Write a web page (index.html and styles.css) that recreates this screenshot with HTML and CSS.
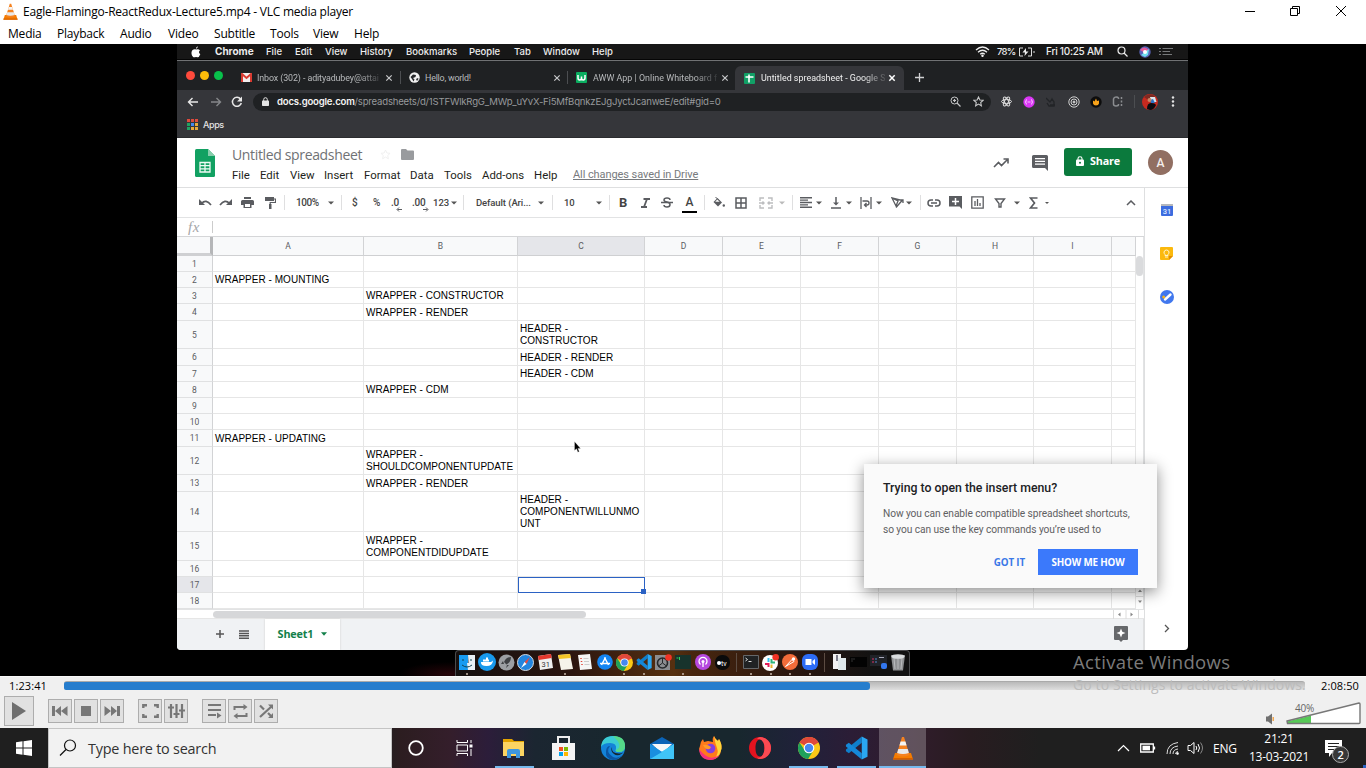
FILE: index.html
```html
<!DOCTYPE html>
<html lang="en">
<head>
<meta charset="utf-8">
<title>Eagle-Flamingo-ReactRedux-Lecture5.mp4 - VLC media player</title>
<link rel="stylesheet" href="styles.css">
</head>
<body>
<svg width="0" height="0" class="defs">
  <defs>
    <symbol id="cone" viewBox="0 0 20 24">
      <path d="M2 17h16l2 6.500H0z" fill="#f57c00"/><path d="M0 22h20v1.500H0z" fill="#d65f00"/>
      <path d="M9 1h2l5.500 18q-6.500 3-13 0z" fill="#f58220"/>
      <path d="M7.600 5.500h4.800l1.200 4H6.400z" fill="#f4f4f4"/><path d="M5.300 13h9.400l1.200 4q-6 2-11.800 0z" fill="#e9e9e9"/>
    </symbol>
    <symbol id="chrome" viewBox="0 0 24 24">
      <circle cx="12" cy="12" r="12" fill="#fbc816"/>
      <path d="M12 12 1.600 6A12 12 0 0 1 22.400 6z" fill="#e0483a"/><path d="M12 0A12 12 0 0 1 22.400 6.500H12z" fill="#e0483a"/>
      <path d="M1.600 6A12 12 0 0 0 11 24L17 14.500 12 12 7 14z" fill="#1fa15c"/>
      <circle cx="12" cy="12" r="5.800" fill="#fff"/><circle cx="12" cy="12" r="4.600" fill="#4788f0"/>
    </symbol>
    <symbol id="code" viewBox="0 0 24 24">
      <path d="M17.500 0v6.500L4 17.500 1 15.500v-2z" fill="#0f7fcb"/>
      <path d="M17.500 24v-6.500L4 6.500 1 8.500v2z" fill="#1588d8"/>
      <path d="M17.500 0 23.500 3v18l-6 3z" fill="#2aa7f2"/>
    </symbol>
    <symbol id="down" viewBox="0 0 6 4"><path d="M0 .5h6L3 3.500z" fill="#555"/></symbol>
    <symbol id="x" viewBox="0 0 8 8"><path d="M1.300 1.300l5.400 5.400M6.700 1.300 1.300 6.700" stroke="#c8c9cb" stroke-width="1.200"/></symbol>
  </defs>
</svg>

<header class="titlebar">
  <svg class="logo" width="15" height="17"><use href="#cone"/></svg>
  <span class="title">Eagle-Flamingo-ReactRedux-Lecture5.mp4 - VLC media player</span>
  <svg width="12" height="12" viewBox="0 0 12 12"><path d="M1 6.500h10" stroke="#000"/></svg>
  <svg width="12" height="12" viewBox="0 0 12 12" fill="none" stroke="#000"><path d="M1.500 3.500h7v7h-7zM3.500 3.500v-2h7v7h-2"/></svg>
  <svg width="12" height="12" viewBox="0 0 12 12"><path d="M1 1l10 10M11 1 1 11" stroke="#000"/></svg>
</header>
<nav class="menubar"><span>Media</span><span>Playback</span><span>Audio</span><span>Video</span><span>Subtitle</span><span>Tools</span><span>View</span><span>Help</span></nav>

<main class="stage">
<div class="video">
  <div class="macbar">
    <svg width="10" height="12" viewBox="0 0 10 12"><path d="M6.800.3Q7 2 5 3 4.900 1 6.800.3M5 3.600Q7.500 2.500 9 4.400 6.800 5.900 9.300 8.200 8 11.500 6.500 11.200 5 10.600 3.700 11.200C1.900 11.800.200 8.500.5 6.400.800 3.900 3 2.800 5 3.600" fill="#fff"/></svg>
    <b>Chrome</b><span>File</span><span>Edit</span><span>View</span><span>History</span><span>Bookmarks</span><span>People</span><span>Tab</span><span>Window</span><span>Help</span>
    <svg width="15" height="11" viewBox="0 0 15 11" fill="none" stroke="#eee" stroke-width="1.300"><path d="M1 4q6.500-6 13 0M3 6.200q4.500-4 9 0M5.200 8.300q2.300-2 4.600 0"/><circle cx="7.500" cy="9.800" r=".6" fill="#eee"/></svg>
    <span class="pct">78%</span>
    <svg width="17" height="10" viewBox="0 0 17 10" fill="none" stroke="#ddd"><path d="M5 1H1.500v8H5M10 1h3.500v8H10M16 4v2"/><path d="M8 1 4.500 5.500H7L6.500 9 10.500 4.500H8z" fill="#eee" stroke="none"/></svg>
    <span class="clock">Fri 10:25 AM</span>
    <svg width="11" height="11" viewBox="0 0 11 11" fill="none" stroke="#eee" stroke-width="1.200"><circle cx="4.500" cy="4.500" r="3.500"/><path d="m7 7 3.500 3.500"/></svg>
    <svg width="12" height="12" viewBox="0 0 12 12"><circle cx="6" cy="6" r="5.700" fill="#5a63b8"/><path d="M1 4q4-5 9 0L6 7z" fill="#e45b9b"/><path d="M2 9l8-6-1 6-3 2z" fill="#6fe0ee"/><circle cx="6" cy="6" r="2" fill="#fff"/></svg>
    <svg width="14" height="9" viewBox="0 0 14 9" stroke="#77797b"><path d="M0 1.500h2M3.500 1.500H14M0 4.500h2M3.500 4.500H11M0 7.500h2M3.500 7.500H13"/></svg>
  </div>

  <div class="tabs">
    <i class="light red"></i><i class="light yellow"></i><i class="light green"></i>
    <svg class="gm" width="11" height="9" viewBox="0 0 11 9"><path d="M0 0h11v9H0z" fill="#f3eeee"/><path d="M1 9V1l4.500 4L10 1v8" fill="none" stroke="#d93a30" stroke-width="2"/></svg>
    <span class="t1 fade">Inbox (302) - adityadubey@attai</span>
    <svg width="8" height="8"><use href="#x"/></svg><i class="sep"></i>
    <svg width="11" height="11" viewBox="0 0 11 11"><circle cx="5.500" cy="5.500" r="5.200" fill="#f1f1f1"/><path d="M1.500 5 4 2.500l3 .5-.5 2L4 6l1.500 1.500-1 2L3 7zM7 7l2-1 .5 1L8 9z" fill="#25272a"/></svg>
    <span class="t2">Hello, world!</span>
    <svg width="8" height="8"><use href="#x"/></svg><i class="sep"></i>
    <svg width="11" height="11" viewBox="0 0 11 11"><rect width="11" height="11" rx="1" fill="#0aae60"/><path d="M2 3v3q0 2 1.700 2T5.500 6V4.500V6q0 2 1.700 2T9 6V3" fill="none" stroke="#fff" stroke-width="1.500"/></svg>
    <span class="t3 fade">AWW App | Online Whiteboard f</span>
    <svg width="8" height="8"><use href="#x"/></svg>
    <div class="active">
      <svg width="11" height="11" viewBox="0 0 11 11"><rect width="11" height="11" rx="1" fill="#11a066"/><path d="M1.500 4h8M5 1.500v8" stroke="#fff" stroke-width="1.600"/></svg>
      <span class="t4 fade">Untitled spreadsheet - Google S</span>
      <svg width="8" height="8" viewBox="0 0 8 8"><path d="M1.300 1.300l5.400 5.400M6.700 1.300 1.300 6.700" stroke="#fff" stroke-width="1.500"/></svg>
    </div>
    <svg width="9" height="9" viewBox="0 0 9 9"><path d="M4.500 0v9M0 4.500h9" stroke="#d0d1d3" stroke-width="1.300"/></svg>
  </div>

  <div class="address">
    <svg width="12" height="10" viewBox="0 0 12 10" fill="none" stroke="#e8e8e8" stroke-width="1.400"><path d="M11 5H1.500M5.500 1l-4 4 4 4"/></svg>
    <svg width="12" height="10" viewBox="0 0 12 10" fill="none" stroke="#85878a" stroke-width="1.400"><path d="M1 5h9.500M6.500 1l4 4-4 4"/></svg>
    <svg width="12" height="12" viewBox="0 0 12 12"><path d="M9.600 3.200A4.500 4.500 0 1 0 10.300 7" fill="none" stroke="#e8e8e8" stroke-width="1.500"/><path d="M11 .5v5H6z" fill="#e8e8e8"/></svg>
    <div class="omni">
      <svg width="7" height="9" viewBox="0 0 7 9"><rect y="3.500" width="7" height="5.500" rx=".7" fill="#e4e4e4"/><path d="M1.700 4V2.500q0-1.800 1.800-1.800t1.800 1.800V4" fill="none" stroke="#e4e4e4"/></svg>
      <span class="url"><b>docs.google.com</b>/spreadsheets/d/1STFWlkRgG_MWp_uYvX-Fi5MfBqnkzEJgJyctJcanweE/edit#gid=0</span>
      <svg width="11" height="11" viewBox="0 0 11 11" fill="none" stroke="#c6c7c8"><circle cx="4.500" cy="4.500" r="3.500"/><path d="m7 7 3.500 3.500M3 4.500h3M4.500 3v3" stroke-width="1.200"/></svg>
      <svg width="11" height="11" viewBox="0 0 11 11"><path d="m5.500 1 1.400 3 3.200.3-2.400 2.200.7 3.300-2.900-1.700-2.900 1.700.7-3.300L.9 4.300l3.200-.3z" fill="none" stroke="#c6c7c8" stroke-width="1.100"/></svg>
    </div>
    <svg width="11" height="11" viewBox="0 0 11 11" fill="none" stroke="#dedede"><ellipse cx="5.500" cy="5.500" rx="5" ry="2"/><ellipse cx="5.500" cy="5.500" rx="5" ry="2" transform="rotate(60 5.500 5.500)"/><ellipse cx="5.500" cy="5.500" rx="5" ry="2" transform="rotate(120 5.500 5.500)"/></svg>
    <svg width="12" height="12" viewBox="0 0 12 12"><circle cx="6" cy="6" r="5.700" fill="#db36f5"/><path d="M4 3.500q-1 0-1 1.500T2.200 6Q3 6 3 7t1 1.500M8 3.500q1 0 1 1.500t.8 1Q9 6 9 7T8 8.500M4.500 6h3" fill="none" stroke="#f6c8ff"/></svg>
    <svg width="10" height="10" viewBox="0 0 10 10" fill="none" stroke="#222427" stroke-width="1.300"><path d="M0 1l4 4 2-3 2 3v4H3L1 6M4 8h5"/></svg>
    <svg width="12" height="12" viewBox="0 0 12 12" fill="none" stroke="#cfcfcf"><circle cx="6" cy="6" r="5.200"/><circle cx="6" cy="6" r="3"/><circle cx="6" cy="6" r="1" fill="#cfcfcf"/></svg>
    <svg width="12" height="12" viewBox="0 0 12 12"><circle cx="6" cy="6" r="5.700" fill="#0d0d0d"/><path d="M3 4.500 4.500 5.500 6 2.500l1 2.500 2-.5v3Q8.500 9.500 6 9.500T3 7.500z" fill="#f9a31a"/></svg>
    <svg width="12" height="11" viewBox="0 0 12 11"><path d="M6.500 3V2q-.5-1-2.500-1T1.500 3v5q0 2 2.500 2t2.500-1.500V8M9.500 1v2M9.500 4.500v2M9.500 8v2" fill="none" stroke="#8b8d90" stroke-width="1.500"/></svg>
    <i class="sep"></i>
    <svg width="16" height="16" viewBox="0 0 16 16"><circle cx="8" cy="8" r="8" fill="#c8291f"/><path d="M2 3q5-5 11-1L9 8z" fill="#7e2a22"/><path d="M8 3h5l1.500 5H9z" fill="#dbe7ee"/><path d="M8 6l3-1 2 4H9z" fill="#2874c7"/><path d="M5 15q0-6 4-6t5 2q-2 5-6 5z" fill="#0b0b10"/><circle cx="7.500" cy="6" r="2" fill="#c98664"/></svg>
    <svg width="4" height="11" viewBox="0 0 4 11" fill="#e4e4e4"><circle cx="2" cy="1.500" r="1.200"/><circle cx="2" cy="5.500" r="1.200"/><circle cx="2" cy="9.500" r="1.200"/></svg>
  </div>
  <div class="bookmarks">
    <svg width="11" height="11" viewBox="0 0 11 11"><path d="M0 0h3v3H0zM4 0h3v3H4zM8 0h3v3H8z" fill="#de4a3d"/><path d="M0 4h3v3H0zM0 8h3v3H0z" fill="#1fa463"/><path d="M4 4h3v3H4z" fill="#4688f1"/><path d="M8 4h3v3H8zM4 8h3v3H4zM8 8h3v3H8z" fill="#e9a83a"/></svg>
    <span>Apps</span>
  </div>

  <div class="sheets">
    <div class="dochead">
      <svg class="doclogo" width="20" height="28" viewBox="0 0 20 28"><path d="M1.500 0H13l7 7v19.500q0 1.500-1.500 1.500h-17Q0 28 0 26.500v-25Q0 0 1.500 0" fill="#12a162"/><path d="M13 0l7 7h-7z" fill="#87ceac"/><path d="M5 13.500h10v9.500H5zM10 13.500V23M5 16.700h10M5 19.800h10" fill="none" stroke="#eefaf4" stroke-width="1.300"/></svg>
      <div class="docinfo">
        <div class="docname"><span>Untitled spreadsheet</span>
          <svg width="11" height="11" viewBox="0 0 11 11"><path d="m5.500 1 1.400 3 3.200.3-2.400 2.200.7 3.300-2.900-1.700-2.900 1.700.7-3.300L.9 4.300l3.200-.3z" fill="none" stroke="#f0f0f0"/></svg>
          <svg width="13" height="11" viewBox="0 0 13 11"><path d="M1 0h4l1.500 1.500H12q1 0 1 1V10q0 1-1 1H1q-1 0-1-1V1q0-1 1-1" fill="#999b9e"/></svg></div>
        <div class="docmenu"><span>File</span><span>Edit</span><span>View</span><span>Insert</span><span>Format</span><span>Data</span><span>Tools</span><span>Add-ons</span><span>Help</span><span class="saved">All changes saved in Drive</span></div>
      </div>
      <svg width="16" height="10" viewBox="0 0 16 10" fill="none" stroke="#5a5c60" stroke-width="1.600"><path d="m1 9 4.500-4.500 3 3L14 2M10.500 1H15v4.500"/></svg>
      <svg width="16" height="16" viewBox="0 0 16 16"><path d="M1.500 0h13Q16 0 16 1.500V16l-3-3H1.500Q0 13 0 11.500v-10Q0 0 1.500 0" fill="#5c5e62"/><path d="M3 3.700h10M3 6.400h10M3 9.100h10" stroke="#fff" stroke-width="1.200"/></svg>
      <div class="share"><svg width="8" height="10" viewBox="0 0 8 10"><rect y="3.500" width="8" height="6.500" rx="1" fill="#fff"/><path d="M2 4V2.500Q2 .7 4 .7t2 1.800V4" fill="none" stroke="#fff" stroke-width="1.100"/><circle cx="4" cy="6.700" r="1" fill="#0b7a3d"/></svg><span>Share</span></div>
      <div class="avatar">A</div>
    </div>
    <div class="body">
      <div class="left">
        <div class="tools">
          <svg width="14" height="8" viewBox="0 0 14 8"><path d="M1 0v6h6z" fill="#5a5c60"/><path d="M3.500 4.500Q8-.5 13 6" fill="none" stroke="#5a5c60" stroke-width="1.700"/></svg>
          <svg width="14" height="8" viewBox="0 0 14 8"><path d="M13 0v6H7z" fill="#5a5c60"/><path d="M10.500 4.500Q6-.5 1 6" fill="none" stroke="#5a5c60" stroke-width="1.700"/></svg>
          <svg width="13" height="11" viewBox="0 0 13 11"><path d="M3 0h7v2H3zM1.500 3h10Q13 3 13 4.500V8h-2.500v3h-8V8H0V4.500Q0 3 1.500 3" fill="#5a5c60"/><path d="M4 7h5v3H4z" fill="#fff"/></svg>
          <svg width="11" height="12" viewBox="0 0 11 12"><path d="M0 0h9v4H0zM4 7h2.500v5H4z" fill="#5a5c60"/><path d="M9 2h1.500v3.500H5.200V8" fill="none" stroke="#5a5c60" stroke-width="1.200"/></svg>
          <i class="bar"></i><span class="zoomlevel">100%</span><svg width="6" height="4"><use href="#down"/></svg><i class="bar"></i>
          <b>$</b><b>%</b>
          <b class="dec">.0<svg width="6" height="5" viewBox="0 0 6 5"><path d="M6 2.500H1.500M3 .5l-2 2 2 2" fill="none" stroke="#5a5c60"/></svg></b>
          <b class="dec">.00<svg width="6" height="5" viewBox="0 0 6 5"><path d="M0 2.500h4.500M3 .5l2 2-2 2" fill="none" stroke="#5a5c60"/></svg></b>
          <b class="n123">123</b><svg width="6" height="4"><use href="#down"/></svg><i class="bar"></i>
          <span class="def">Default (Ari...</span><svg width="6" height="4"><use href="#down"/></svg><i class="bar"></i>
          <span class="def">10</span><svg width="6" height="4"><use href="#down"/></svg><i class="bar"></i>
          <b class="big">B</b>
          <svg width="11" height="10" viewBox="0 0 11 10"><path d="M3.500 1H10M1 9h6M7 1 4 9" stroke="#5a5c60" stroke-width="1.800"/></svg>
          <svg width="12" height="11" viewBox="0 0 12 11" fill="none" stroke="#5a5c60" stroke-width="1.500"><path d="M9 3Q9 1 6 1T3 3q0 1.500 3 2t3 2.500Q9 10 6 10T3 8"/><path d="M0 5.500h12" stroke-width="1.300"/></svg>
          <b class="ink">A</b><i class="bar"></i>
          <svg width="12" height="11" viewBox="0 0 12 11"><path d="m4.500 1 4.500 4.500L5 9.500.5 5z" fill="#5a5c60"/><path d="M2.500 0 6 3.500" stroke="#5a5c60"/><path d="M4.300 2.500 2.200 4.800h4.500z" fill="#fff"/><circle cx="10.800" cy="8.500" r="1.200" fill="#5a5c60"/></svg>
          <svg width="12" height="12" viewBox="0 0 12 12"><path d="M1 1h10v10H1zM6 1v10M1 6h10" fill="none" stroke="#5a5c60" stroke-width="1.500"/></svg>
          <svg width="14" height="12" viewBox="0 0 14 12" fill="none" stroke="#bcbdbf" stroke-width="1.400"><path d="M5 1H1v3M9 1h4v3M5 11H1V8M9 11h4V8M0 6h5M9 6h5M3.500 4.500 5 6 3.500 7.500M10.500 4.500 9 6l1.500 1.500"/></svg>
          <svg width="6" height="4" opacity=".4"><use href="#down"/></svg><i class="bar"></i>
          <svg width="12" height="11" viewBox="0 0 12 11" stroke="#5a5c60" stroke-width="1.400"><path d="M0 .7h12M0 3.100h8M0 5.500h12M0 7.900h8M0 10.300h12"/></svg><svg width="6" height="4"><use href="#down"/></svg>
          <svg width="10" height="12" viewBox="0 0 10 12"><path d="M0 11h10M5 0v6" stroke="#5a5c60" stroke-width="1.500"/><path d="M2 5.500h6L5 8.500z" fill="#5a5c60"/></svg><svg width="6" height="4"><use href="#down"/></svg>
          <svg width="12" height="12" viewBox="0 0 12 12" fill="none" stroke="#5a5c60" stroke-width="1.300"><path d="M1 0v12M11 0v12M2.500 4H7q2 0 2 2T7 8H5M6.500 6 4.500 8l2 2"/></svg><svg width="6" height="4"><use href="#down"/></svg>
          <svg width="13" height="12" viewBox="0 0 13 12" fill="none" stroke="#5a5c60" stroke-width="1.300"><path d="M1 1l4 8 2-5zM1 1l8 2M5 10.500 11.500 3M9 3h3v3"/></svg><svg width="6" height="4"><use href="#down"/></svg><i class="bar"></i>
          <svg width="14" height="8" viewBox="0 0 14 8" fill="none" stroke="#5a5c60" stroke-width="1.500"><path d="M6 1H4Q1 1 1 4t3 3h2M8 1h2q3 0 3 3t-3 3H8M4 4h6"/></svg>
          <svg width="13" height="13" viewBox="0 0 13 13"><path d="M0 0h13v13l-2.500-2.500H0z" fill="#5a5c60"/><path d="M6.500 2v7M3 5.500h7" stroke="#fff" stroke-width="1.500"/></svg>
          <svg width="13" height="13" viewBox="0 0 13 13" fill="none" stroke="#5a5c60" stroke-width="1.300"><path d="M.8.8h11.400v11.400H.8zM4 5v5M6.500 3v7M9 7v3"/></svg>
          <svg width="12" height="10" viewBox="0 0 12 10"><path d="M1.500 1h9L7 5.500V9H5V5.500z" fill="none" stroke="#5a5c60" stroke-width="1.400"/></svg><svg width="6" height="4"><use href="#down"/></svg>
          <svg width="9" height="12" viewBox="0 0 9 12"><path d="M8.500 1H1.500L5.500 6 1.500 11h7" fill="none" stroke="#5a5c60" stroke-width="1.700"/></svg><svg width="4" height="4"><use href="#down"/></svg>
          <svg width="10" height="6" viewBox="0 0 10 6"><path d="m1 5 4-4 4 4" fill="none" stroke="#5a5c60" stroke-width="1.500"/></svg>
        </div>
        <div class="formula"><em>fx</em><i></i></div>
        <div class="gridwrap">
        <table class="grid">
          <colgroup><col class="ch"><col class="ca"><col class="cb"><col class="cc"><col class="cd"><col class="cd"><col class="cd"><col class="cd"><col class="ce"><col class="cd"><col class="cj"></colgroup>
          <tr class="cols"><th class="corner"><th>A<th>B<th class="sel">C<th>D<th>E<th>F<th>G<th>H<th>I<th>
          <tr class="r16"><th>1<td><td><td><td><td><td><td><td><td><td>
          <tr class="r16"><th>2<td>WRAPPER - MOUNTING<td><td><td><td><td><td><td><td><td>
          <tr class="r16"><th>3<td><td>WRAPPER - CONSTRUCTOR<td><td><td><td><td><td><td><td>
          <tr class="r17"><th>4<td><td>WRAPPER - RENDER<td><td><td><td><td><td><td><td>
          <tr class="r28"><th>5<td><td><td>HEADER -<br>CONSTRUCTOR<td><td><td><td><td><td><td>
          <tr class="r17"><th>6<td><td><td>HEADER - RENDER<td><td><td><td><td><td><td>
          <tr class="r16"><th>7<td><td><td>HEADER - CDM<td><td><td><td><td><td><td>
          <tr class="r16"><th>8<td><td>WRAPPER - CDM<td><td><td><td><td><td><td><td>
          <tr class="r16"><th>9<td><td><td><td><td><td><td><td><td><td>
          <tr class="r16"><th>10<td><td><td><td><td><td><td><td><td><td>
          <tr class="r17"><th>11<td>WRAPPER - UPDATING<td><td><td><td><td><td><td><td><td>
          <tr class="r28"><th>12<td><td>WRAPPER -<br>SHOULDCOMPONENTUPDATE<td><td><td><td><td><td><td><td>
          <tr class="r17"><th>13<td><td>WRAPPER - RENDER<td><td><td><td><td><td><td><td>
          <tr class="r40"><th>14<td><td><td>HEADER -<br>COMPONENTWILLUNMO<br>UNT<td><td><td><td><td><td><td>
          <tr class="r29"><th>15<td><td>WRAPPER -<br>COMPONENTDIDUPDATE<td><td><td><td><td><td><td><td>
          <tr class="r16"><th>16<td><td><td><td><td><td><td><td><td><td>
          <tr class="r16"><th class="sel">17<td><td><td class="cur"><td><td><td><td><td><td><td>
          <tr class="r16"><th>18<td><td><td><td><td><td><td><td><td><td>
        </table>
        <div class="vscroll"><i></i><svg width="8" height="24" viewBox="0 0 8 24"><path d="M0 .5h8M0 11.500h8" stroke="#dcdcdc"/><path d="M2 7h4L4 4.500zM2 15.500h4L4 18z" fill="#888"/></svg></div>
        </div>
        <div class="hscroll"><i class="thumb"></i><svg width="27" height="9" viewBox="0 0 27 9"><path d="M.5 0v9M13 0v9M25.500 0v9" stroke="#dcdcdc"/><path d="M7.500 2.500v4L5 4.500zM17.500 2.500v4L20 4.500z" fill="#888"/></svg></div>
        <div class="sheetbar">
          <svg width="8" height="8" viewBox="0 0 8 8"><path d="M4 0v8M0 4h8" stroke="#555" stroke-width="1.500"/></svg>
          <svg width="10" height="9" viewBox="0 0 10 9"><path d="M0 1h10M0 3.400h10M0 5.800h10M0 8.200h10" stroke="#555" stroke-width="1.500"/></svg>
          <div class="sheettab"><b>Sheet1</b><svg width="6" height="4" viewBox="0 0 6 4"><path d="M0 .3h6L3 3.700z" fill="#12804a"/></svg></div>
          <svg width="14" height="16" viewBox="0 0 14 16"><path d="M1 0h12q1 0 1 1v12q0 1-1 1H9l-2 2-2-2H1q-1 0-1-1V1q0-1 1-1" fill="#66686b"/><path d="M7 2.500 8.300 5.700 11.500 7 8.300 8.300 7 11.500 5.700 8.300 2.500 7 5.700 5.700z" fill="#fff"/></svg>
        </div>
      </div>
      <aside class="side">
        <svg width="12" height="12" viewBox="0 0 12 12"><path d="M0 0h12v2.500H0z" fill="#b5b8bd"/><path d="M0 2h12v9q0 1-1 1H1q-1 0-1-1z" fill="#3c6cdf"/><text x="6" y="9.500" font-size="7.500" text-anchor="middle" fill="#dfe9ff">31</text></svg>
        <svg width="13" height="13" viewBox="0 0 13 13"><path d="M1 0h11q1 0 1 1v8l-4 4H1q-1 0-1-1V1q0-1 1-1" fill="#fbb90d"/><path d="M13 9l-4 4V9z" fill="#e38b00"/><path d="M5 8.500V7.300Q3.800 6.500 4 5q.5-2 2.500-2T9 5Q9.200 6.500 8 7.300v1.200zM5 10h3" fill="none" stroke="#fff3cc"/></svg>
        <svg width="14" height="14" viewBox="0 0 14 14"><circle cx="7" cy="7" r="7" fill="#4178ee"/><path d="M5 9.500 10.500 4.500" fill="none" stroke="#fff" stroke-width="2.400" stroke-linecap="round"/><circle cx="3.700" cy="7" r="1.500" fill="#f6b31b"/></svg>
        <svg class="expand" width="6" height="9" viewBox="0 0 6 9"><path d="m1 1 3.500 3.500L1 8" fill="none" stroke="#555" stroke-width="1.300"/></svg>
      </aside>
    </div>
  </div>

  <div class="dockrow"><div class="dock">
    <svg width="16" height="15" viewBox="0 0 16 15"><path d="M0 0h9v15H0z" fill="#189bf2"/><path d="M9 0h7v15H9L8 8h1.500z" fill="#e8f0f6"/><path d="M3 10q5 4 10 0M4 4v2M12 4v2" fill="none" stroke="#145"/></svg>
    <svg width="18" height="18" viewBox="0 0 18 18"><circle cx="9" cy="9" r="9" fill="#1899ec"/><path d="M3 9h10l2-1.500Q14.500 13 8.500 13T3 9M5 6.500h6V8.500H5zM8 4.500h2v2H8z" fill="#fff"/></svg>
    <svg width="17" height="17" viewBox="0 0 17 17"><circle cx="8.500" cy="8.500" r="8" fill="#9c9fa3"/><path d="M13 3q-5 0-7 5l2.500 2.500Q13 8 13 3M5 7 3 10h3M9 11l-1 3 3-3" fill="#3f4144"/></svg>
    <svg width="17" height="17" viewBox="0 0 17 17"><circle cx="8.500" cy="8.500" r="8" fill="#2385df" stroke="#d7dadd"/><path d="m13 3-3.500 7-2-2z" fill="#e84a3f"/><path d="m4 14 3.500-6 2 2z" fill="#fff"/></svg>
    <svg width="15" height="16" viewBox="0 0 15 16"><path d="m0 2 13-2 2 14-13 2z" fill="#f0f0f0"/><path d="m0 2 13-2 .6 4-13 2z" fill="#e3382d"/><text x="3.500" y="13" font-size="7.500" fill="#333">31</text></svg>
    <svg width="15" height="16" viewBox="0 0 15 16"><path d="m0 1 12-1 3 15-12 1z" fill="#f5f3ea"/><path d="m0 1 12-1 .8 4L1 5z" fill="#f4c526"/></svg>
    <svg width="14" height="16" viewBox="0 0 14 16"><path d="m0 1 12-1 2 15-12 1z" fill="#f6f6f6"/><path d="M3 4v1M3.500 7v1M4 10v1" stroke="#e0453a" stroke-width="1.500"/><path d="M5.500 4.500h5M6 7.500h5M6.500 10.500h5" stroke="#ccc"/></svg>
    <svg width="16" height="16" viewBox="0 0 16 16"><circle cx="8" cy="8" r="7.800" fill="#1485f3"/><path d="M8.500 3.500 4.500 11M7.500 3.500 11.500 11M3 9.500h10" stroke="#fff" stroke-width="1.500"/></svg>
    <svg width="17" height="17"><use href="#chrome"/></svg>
    <svg width="16" height="16"><use href="#code"/></svg>
    <svg width="17" height="17" viewBox="0 0 17 17"><path d="M0 1h15v15H0z" fill="#8b8d90"/><circle cx="7.500" cy="9" r="5" fill="none" stroke="#26282b" stroke-width="1.600"/><path d="M7.500 9V4M7.500 9l4 3M7.500 9l-4 3" stroke="#26282b"/><circle cx="13.500" cy="3.500" r="3.300" fill="#f23325"/></svg>
    <svg width="16" height="14" viewBox="0 0 16 14"><path d="M0 0h16v14H0z" fill="#17332c"/><path d="M1.500 3h2M4.500 2v3" stroke="#2fd05c"/></svg>
    <svg width="16" height="16" viewBox="0 0 16 16"><circle cx="8" cy="8" r="8" fill="#b648df"/><path d="M5.500 10.500a4 4 0 1 1 5 0M8 8v5" fill="none" stroke="#fff" stroke-width="1.300"/><circle cx="8" cy="7.500" r="1.500" fill="#fff"/></svg>
    <svg width="15" height="15" viewBox="0 0 15 15"><rect width="15" height="15" rx="7" fill="#0a0a0b"/><circle cx="4" cy="8" r="2" fill="#fff"/><text x="6" y="10.500" font-size="7" fill="#fff">tv</text></svg>
    <i class="ds"></i>
    <svg width="16" height="14" viewBox="0 0 16 14"><path d="M.5.5h15v13H.5z" fill="#202224" stroke="#65676a"/><path d="m2.500 3 2 1.500-2 1.500M5.500 6.500h3" fill="none" stroke="#ddd"/></svg>
    <svg width="17" height="17" viewBox="0 0 17 17"><circle cx="8" cy="9" r="8" fill="#fff"/><path d="M6.500 4v4" stroke="#36c5f0" stroke-width="2"/><path d="M9.500 5v3.500H13" stroke="#2eb67d" stroke-width="2" fill="none"/><path d="M9.500 10.500V14" stroke="#ecb22e" stroke-width="2"/><path d="M3 10h3.500v3" fill="none" stroke="#e01e5a" stroke-width="2"/><circle cx="13.700" cy="3.300" r="3.300" fill="#f23325"/></svg>
    <svg width="16" height="16" viewBox="0 0 16 16"><circle cx="8" cy="8" r="8" fill="#f36c3a"/><path d="m3.500 12.500 6.500-7 2 2z" fill="none" stroke="#fff"/><circle cx="11.500" cy="5" r="1.700" fill="#fff"/></svg>
    <svg width="16" height="16" viewBox="0 0 16 16"><rect width="16" height="16" rx="6" fill="#2d6cf6"/><path d="M3.500 5h6v6h-6zM10.500 7 13 5v6l-2.500-2z" fill="#fff"/></svg>
    <i class="ds"></i>
    <svg width="13" height="16" viewBox="0 0 13 16"><path d="M0 0h8v15H0z" fill="#f2f2f2"/><path d="M5 4h8v12H5z" fill="#dfe8ea"/><path d="M4 1v6" stroke="#556" stroke-width="1.500"/></svg>
    <svg width="17" height="10" viewBox="0 0 17 10"><path d="M0 0h17v10H0z" fill="#030303"/><path d="M1 2h4M1 4h2" stroke="#333"/></svg>
    <svg width="17" height="14" viewBox="0 0 17 14"><path d="M0 0h17v11H0z" fill="#202328"/><path d="M2 4h2M2 7h2" stroke="#d36"/><path d="M5 4h2M5 7h2" stroke="#58c"/><path d="M9 2.500h5" stroke="#aab"/><rect x="11" y="8" width="6" height="6" rx="2" fill="#3277ee"/></svg>
    <svg width="14" height="17" viewBox="0 0 14 17"><path d="M0 1h14l-2 15.500H2z" fill="#8f9193"/><path d="m3 4 1 11M7 4v11M11 4l-1 11" stroke="#b9bbbd"/><ellipse cx="7" cy="2.500" rx="6.500" ry="2.300" fill="#d9dcde"/></svg>
    <i class="dot d1"></i><i class="dot d6"></i><i class="dot d9"></i><i class="dot d10"></i><i class="dot d12"></i><i class="dot d16"></i><i class="dot d17"></i><i class="dot d18"></i><i class="dot d19"></i>
  </div></div>
  <svg class="pointer" width="7" height="12" viewBox="0 0 7 12"><path d="M.5.500v9l2-1.700 1.400 3.400 1.400-.6-1.400-3.200h2.700z" fill="#000" stroke="#fff" stroke-width=".3"/></svg>
  <div class="tip">
    <h3>Trying to open the insert menu?</h3>
    <p>Now you can enable compatible spreadsheet shortcuts,<br>so you can use the key commands you’re used to</p>
    <div class="acts"><span class="got">GOT IT</span><span class="show">SHOW ME HOW</span></div>
  </div>
</div>
</main>

<section class="player">
  <div class="seek"><span>1:23:41</span><div class="track"><i></i></div><span>2:08:50</span></div>
  <div class="controls">
    <div class="btn play"><svg width="16" height="18" viewBox="0 0 16 18"><path d="M1 0l14 9L1 18z" fill="#6f6f6f"/></svg></div>
    <div class="group">
      <div class="btn"><svg width="16" height="10" viewBox="0 0 16 10" fill="#777"><path d="M0 0h3v10H0zM9 0v10L3 5zM15.500 0v10L9 5z"/></svg></div>
      <div class="btn"><svg width="10" height="10"><path d="M0 0h10v10H0z" fill="#777"/></svg></div>
      <div class="btn"><svg width="16" height="10" viewBox="0 0 16 10" fill="#777"><path d="M13 0h3v10h-3zM7 0v10l6-5zM.5 0v10L7 5z"/></svg></div>
    </div>
    <div class="group">
      <div class="btn"><svg width="17" height="14" viewBox="0 0 17 14"><path d="M1.300 4V1.300H5M12 1.300h3.700V4M15.700 10v2.700H12M5 12.700H1.300V10" fill="none" stroke="#777" stroke-width="2.400"/></svg></div>
      <div class="btn"><svg width="17" height="14" viewBox="0 0 17 14"><path d="M3 0v14M8.500 0v14M14 0v14" stroke="#777" stroke-width="2.200"/><path d="M0 3.500h6M5.500 10h6M11 6.500h6" stroke="#777" stroke-width="2"/></svg></div>
    </div>
    <div class="group">
      <div class="btn"><svg width="15" height="16" viewBox="0 0 15 16"><path d="M1 2h13M1 7h13M1 12h8" stroke="#777" stroke-width="2"/><path d="M10 9.500v6l4.500-3z" fill="#777"/></svg></div>
      <div class="btn"><svg width="15" height="15" viewBox="0 0 15 15"><path d="M1.500 6V3H11M13.500 9v3H4" fill="none" stroke="#777" stroke-width="2"/><path d="M10.500 0v6L14.500 3zM4.500 9v6L.5 12z" fill="#777"/></svg></div>
      <div class="btn"><svg width="15" height="15" viewBox="0 0 15 15"><path d="m1 1.500 4 4M9 9l4 4M1 13 13 2" stroke="#777" stroke-width="2.200"/><path d="M9 .5h5v5zM9 14h5V9z" fill="#777"/></svg></div>
    </div>
    <svg class="spk" width="9" height="12" viewBox="0 0 9 12"><path d="M0 3.500h2L6 .5v11l-4-3H0z" fill="#707070"/><path d="M7.200 4v4" stroke="#f29b35" stroke-width="1.300"/></svg>
    <svg class="vol" width="75" height="24" viewBox="0 0 75 24"><path d="M1 20 73 2q1 0 1 1v18.500q0 1-1 1H1.500z" fill="#fff"/><path d="M1 20.500 25 14.500V22H1.500z" fill="#57c957"/><path d="M1 20 73 2q1 0 1 1v18.500q0 1-1 1H1.500z" fill="none" stroke="#777" stroke-width="1.400"/><text x="9" y="10.500" font-size="10" fill="#666">40%</text></svg>
  </div>
</section>

<footer class="taskbar">
  <div class="start"><svg width="16" height="16" viewBox="0 0 16 16"><path d="M0 2.200 6.500 1.300v6.200H0zM7.500 1.200 16 0v7.500H7.500zM0 8.500h6.500v6.200L0 13.800zM7.500 8.500H16V16l-8.500-1.200z" fill="#fff"/></svg></div>
  <div class="search"><svg width="18" height="18" viewBox="0 0 18 18"><circle cx="11" cy="6.500" r="5.500" fill="none" stroke="#111" stroke-width="1.200"/><path d="M7 10.500 1 16.500" stroke="#111" stroke-width="1.300"/></svg><span>Type here to search</span></div>
  <div class="apps">
    <div><svg width="16" height="16" viewBox="0 0 16 16"><circle cx="8" cy="8" r="6.800" fill="none" stroke="#fff" stroke-width="1.800"/></svg></div>
    <div><svg width="17" height="16" viewBox="0 0 17 16" fill="none" stroke="#fff"><path d="M1 0v2.500h10.500V0M1 16v-2.500h10.500V16M1 5h10.500v6H1zM15 0v3M15 9v7"/><path d="M13.500 6h3" stroke-width="3"/></svg></div>
    <div class="on"><svg width="22" height="20" viewBox="0 0 22 20"><path d="M0 1h9l2 2h10v14H0z" fill="#e3a300"/><path d="M0 4h21v14H0z" fill="#fcd462"/><path d="M4 20v-7q0-2 2-2h9q2 0 2 2v7h-4v-4H8v4z" fill="#3e97de"/></svg></div>
    <div><svg width="23" height="24" viewBox="0 0 23 24"><path d="M6 8V1h11v7" fill="none" stroke="#eee" stroke-width="2"/><path d="M0 7h23v17H0z" fill="#f4f4f4"/><path d="M7 11h4v4H7z" fill="#f25022"/><path d="M12 11h4v4h-4z" fill="#7fba00"/><path d="M7 16h4v4H7z" fill="#00a4ef"/><path d="M12 16h4v4h-4z" fill="#ffb900"/></svg></div>
    <div><svg width="24" height="24" viewBox="0 0 24 24"><circle cx="12" cy="12" r="12" fill="#1383d9"/><path d="M0 11Q1 0 12 0t12 10q0 6-6 6-5 0-3-3 1-6-6-6Q2 7 0 11" fill="#3bcbd4"/><path d="M12 0q12 0 12 10 0 6-6 6-4 0-3-2 8-4-3-14" fill="#55d989"/><path d="M9 10q-5 6 3 11 5 2 9-2-4 5-9 5Q4 23 5 15q.5-5 4-5" fill="#0b56a4"/><path d="M11 11q-1 7 8 6.500l3.500-1Q17 21 13 18q-4-3-2-7" fill="#17262f"/></svg></div>
    <div><svg width="24" height="22" viewBox="0 0 24 22"><path d="m0 7 12-7 12 7v3H0z" fill="#0b63b7"/><path d="M2 7h20L12 17z" fill="#f5f7f9"/><path d="m0 7 12 8L24 7v15H0z" fill="#2fb4f0"/><path d="m0 22 24-15v15z" fill="#40c4f8"/><path d="m0 7 12 8L0 22z" fill="#1a8ee0"/><path d="M2.500 7h19L12 14z" fill="#f5f7f9"/></svg></div>
    <div><svg width="23" height="24" viewBox="0 0 23 24"><path d="M1 10Q1 6 4 3l1 3 4-1 5 1Q13 2 15 0q1 3 4 5l1-2q3 5 2.500 9.500Q21 24 11.500 24T0 13z" fill="#ff7a1c"/><path d="M15 0q1 3 4 5l1-2q3 5 2.500 9.500Q21 20 16 22q4-5 2-10T15 0" fill="#ffd83a"/><path d="M0 13q1 11 11.500 11 5 0 9-5-6 4-11 2T0 13" fill="#f5317d"/><circle cx="11.500" cy="12.500" r="4.800" fill="#8440df"/><path d="M4 9q4-1 8 2-1 3-4 2-2 0-4-4" fill="#ff9a28"/></svg></div>
    <div><svg width="22" height="22" viewBox="0 0 22 22"><path d="M11 0a11 11 0 1 0 0 22 11 11 0 0 0 0-22m0 2.500c3.500 0 4.500 5 4.500 8.500s-1 8.500-4.500 8.500S6.500 15 6.500 11s1-8.500 4.500-8.500" fill="#e3131f"/><path d="M11 0a11 11 0 0 1 0 22q-2 0-3-1.500c4 1 7.500-3 7.500-9.500S12 1.500 8 2q1.500-2 3-2" fill="#fa4a52"/></svg></div>
    <div class="on"><svg width="22" height="22"><use href="#chrome"/></svg></div>
    <div class="on"><svg width="23" height="24"><use href="#code"/></svg></div>
    <div class="on cur"><svg width="20" height="24"><use href="#cone"/></svg></div>
  </div>
  <div class="tray">
    <svg width="13" height="8" viewBox="0 0 13 8"><path d="m1 7 5.500-5.500L12 7" fill="none" stroke="#fff" stroke-width="1.200"/></svg>
    <svg width="16" height="10" viewBox="0 0 16 10"><path d="M.7 1h12.600v8H.7zM14.500 3.500v3" fill="none" stroke="#fff" stroke-width="1.300"/><path d="M2.500 2.700h7.500v4.600H2.500z" fill="#fff"/></svg>
    <svg width="14" height="14" viewBox="0 0 14 14" fill="none" stroke="#ddd"><path d="M1 13Q1 3 12 1.500M4 13q0-7 8-8M7 13q0-4.500 5-5M9.500 13q0-2 2.500-2.500"/><circle cx="11.500" cy="12.500" r="1" fill="#fff"/></svg>
    <svg width="17" height="14" viewBox="0 0 17 14" fill="none" stroke="#fff"><path d="M1 4.500h2.500L7 1.500v11l-3.500-3H1zM9 5q1.500 2 0 4M11 3q3 4 0 8"/><path d="M13.500 1.500q4 5.500 0 11" stroke="#888"/></svg>
    <span>ENG</span>
    <div class="datetime"><span>21:21</span><span>13-03-2021</span></div>
    <div class="note"><svg width="17" height="17" viewBox="0 0 17 17"><path d="M0 0h17v13H7l-3 4v-4H0z" fill="#fff"/><path d="M3 3.500h11M3 6.500h11M3 9.500h7" stroke="#222" stroke-width="1.200"/></svg><i>2</i></div>
  </div>
</footer>
<div class="watermark"><p>Activate Windows</p><p>Go to Settings to activate Windows.</p></div>
</body>
</html>
```
FILE: styles.css
```css
* { box-sizing: border-box; }
body { margin: 0; width: 1366px; height: 768px; overflow: hidden; position: relative; font-family: "Open Sans", "Noto Sans", sans-serif; background: #fff; }
svg { display: block; flex: none; }
i { font-style: normal; }
span, b { white-space: nowrap; }
.defs { position: absolute; }

.titlebar { height: 24px; padding-left: 3px; display: grid; grid-template-columns: 20px 1221px 45px 46px 20px; align-items: center; }
.titlebar .logo { margin-top: -1px; }
.titlebar svg:not(.logo) { margin-top: -3px; }
.title { font-size: 12px; letter-spacing: -.22px; color: #000; margin-top: -1px; }
.menubar { height: 20px; padding-left: 8px; display: grid; grid-template-columns: 49px 63px 48px 46px 56px 43px 41px 40px; font-size: 12px; line-height: 20px; letter-spacing: -.2px; color: #000; }

.stage { height: 632px; background: #000; display: flex; }
.video { margin-left: 177px; width: 1011px; height: 632px; position: relative; overflow: hidden; background: #000; font-family: Roboto, sans-serif; }
.macbar { height: 16px; background: #171717; color: #ededed; padding-left: 14px; display: grid; grid-template-columns: 24px 51px 29px 30px 35px 46px 63px 45px 29px 49px 383px 22px 21px 28px 71px 22px 20px 14px; align-items: center; font: 500 9.500px/15px Inter, sans-serif; border-bottom: 1px solid #050505; }
.macbar b { font-weight: 700; font-size: 10px; }
.macbar .pct { letter-spacing: -.7px; }
.macbar .clock { font-size: 10px; letter-spacing: -.25px; }

.tabs { height: 30px; border-top: 1px solid #707274; background: #1f2123; padding: 4px 0 0 9px; display: grid; grid-template-columns: 14px 14px 27px 16px 128px 15px 9px 16px 128px 14px 9px 17px 128px 14px 180px 10px; align-items: center; font: 8.900px/12px Roboto, sans-serif; letter-spacing: .02px; color: #b7b9bb; }
.light { width: 9px; height: 9px; border-radius: 50%; margin-top: -5px; }
.red { background: #fe4a3c; } .yellow { background: #fdbc09; } .green { background: #08c14b; }
.sep { width: 1px; height: 13px; background: #4c4e51; }
.fade { -webkit-mask-image: linear-gradient(90deg, #000 82%, transparent 103%); mask-image: linear-gradient(90deg, #000 82%, transparent 103%); }
.t1, .t3, .t4 { width: 124px; }
.t1 { letter-spacing: -.1px; }
.t2 { letter-spacing: -.2px; }
.active { height: 24px; width: 169px; margin-top: 1px; background: #35363a; border-radius: 6px 6px 0 0; padding-left: 9px; display: grid; grid-template-columns: 17px 127px 10px; align-items: center; color: #f0f0f0; }

.address { height: 24px; background: #35363a; padding: 0 0 1px 10px; display: grid; grid-template-columns: 23px 21px 22px 748px 22px 23px 22px 22px 22px 22px 8px 29px 5px; align-items: center; }
.omni { width: 738px; height: 18px; border-radius: 9px; background: #1f2123; padding-left: 9px; display: grid; grid-template-columns: 15px 673px 23px 11px; align-items: center; }
.url { font: 9.600px/14px Inter, sans-serif; color: #97999c; letter-spacing: -.21px; }
.url b { font-weight: 600; color: #f4f4f4; }
.bookmarks { height: 24px; background: #35363a; border-bottom: 1px solid #2b2c2f; padding: 0 0 2px 10px; display: flex; gap: 5px; align-items: center; font: 500 9px/12px Inter, sans-serif; letter-spacing: -.4px; color: #e4e4e4; }

.sheets { height: 512px; background: #fff; border-radius: 0 0 4px 4px; overflow: hidden; }
.dochead { height: 50px; border-bottom: 1px solid #dedfe0; padding-left: 18px; display: grid; grid-template-columns: 37px 761px 39px 32px 84px 26px; align-items: center; }
.doclogo { margin-top: 1px; }
.docinfo { height: 49px; padding-top: 6px; }
.docname { height: 21px; display: grid; grid-template-columns: 148px 21px 14px; align-items: center; font: 14px/20px "Open Sans", sans-serif; letter-spacing: -.35px; color: #707275; }
.docmenu { height: 20px; display: grid; grid-template-columns: 28px 30px 34px 40px 46px 34px 38px 52px 39px 130px; font: 11.400px/20px Roboto, sans-serif; color: #1e1f20; }
.saved { color: #777a7d; text-decoration: underline; font-size: 11px; letter-spacing: -.08px; }
.share { width: 68px; height: 28px; margin-bottom: 1px; border-radius: 3px; background: #0b7a3d; color: #fff; display: flex; gap: 6px; align-items: center; justify-content: center; padding-bottom: 2px; font: 700 10.800px/14px "Open Sans", sans-serif; letter-spacing: -.2px; }
.avatar { width: 25px; height: 25px; border-radius: 50%; background: #916f62; color: #f5eeea; font: 500 12px/26px Roboto, sans-serif; text-align: center; }

.body { display: flex; height: 462px; }
.left { width: 967px; }
.tools { height: 30px; border-bottom: 1px solid #e2e3e4; padding-left: 21px; display: grid; align-items: center; font: 10px/14px Roboto, sans-serif; color: #444;
  grid-template-columns: 21px 22px 24px 19px 12px 32px 13px 11px 21px 18px 21px 21px 18px 12px 13px 62px 14px 12px 32px 13px 10px 21px 21px 21px 22px 9px 22px 24px 20px 13px 8px 16px 15px 15px 14px 16px 15px 15px 14px 7px 22px 22px 23px 20px 15px 16px 81px 10px; }
.tools b { font-weight: 500; }
.zoomlevel { letter-spacing: -.4px; font-weight: 500; }
.bar { width: 1px; height: 15px; background: #dfdfe0; }
.dec { display: flex; align-items: flex-end; letter-spacing: -.2px; }
.dec svg { margin: 0 0 -2px -3px; }
.n123 { font-size: 9.500px; }
.def { font-weight: 500; font-size: 9.500px; letter-spacing: -.1px; }
.tools .big { font: 700 13px/14px Roboto, sans-serif; }
.tools .ink { width: 15px; text-align: center; font: 500 12px/13px Roboto, sans-serif; border-bottom: 2px solid #000; height: 17px; margin-top: 3px; }
.formula { height: 19px; border-bottom: 1px solid #d5d6d8; display: grid; grid-template-columns: 35px 1px; align-items: center; }
.formula em { padding-left: 11px; font: italic 15px/16px "Liberation Serif", serif; letter-spacing: .5px; color: #a5a6a8; }
.formula i { height: 12px; background: #ccc; }

.gridwrap { display: flex; height: 372px; }
.grid { table-layout: fixed; width: 959px; border-spacing: 0; flex: none; height: 0; }
.ch { width: 36px; } .ca { width: 151px; } .cb { width: 154px; } .cc { width: 127px; } .cd { width: 78px; } .ce { width: 77px; } .cj { width: 24px; }
.grid th { padding: 0; background: #f8f9fa; border-right: 1px solid #d2d3d5; border-bottom: 1px solid #e0e1e2; font: 8.500px/10px Roboto, sans-serif; color: #5a5c5f; vertical-align: middle; }
.grid td { padding: 0 0 1px 2px; border-right: 1px solid #e6e6e6; border-bottom: 1px solid #e6e6e6; font: 10px/12px "Liberation Sans", sans-serif; letter-spacing: .03px; color: #000; vertical-align: bottom; white-space: nowrap; }
.grid .cols th { height: 19px; border-bottom-color: #cfd0d2; }
.grid .corner { border-right: 3px solid #b5b6b8; border-bottom: 3px solid #b5b6b8; }
.grid .sel { background: #e5e6ea; }
.r16 { height: 16px; } .r17 { height: 17px; } .r28 { height: 28px; } .r29 { height: 29px; } .r40 { height: 40px; }
.grid .cur { position: relative; outline: 1.500px solid #2b62c4; outline-offset: -1px; }
.cur::after { content: ""; position: absolute; right: -2px; bottom: -2px; width: 5px; height: 5px; background: #2b62c4; }
.vscroll { width: 8px; border-right: 1px solid #e2e3e4; padding-top: 19px; display: flex; flex-direction: column; justify-content: space-between; }
.vscroll i { width: 7px; height: 20px; border-radius: 4px; background: #dadbdd; }
.hscroll { height: 10px; border-top: 1px solid #e2e3e4; border-bottom: 1px solid #e6e6e6; padding: 0 4px 0 36px; display: flex; justify-content: space-between; align-items: center; background: #fff; }
.thumb { width: 373px; height: 7px; border-radius: 4px; background: #d6d7d9; }
.sheetbar { height: 31px; background: #f0f2f4; padding-left: 39px; display: grid; grid-template-columns: 23px 26px 849px 14px; align-items: center; border-right: 1px solid #dfe0e1; }
.sheetbar > svg { margin-top: -1px; }
.sheettab { width: 75px; height: 31px; background: #fff; box-shadow: 0 0 2px #ccc; display: flex; gap: 8px; align-items: center; justify-content: center; padding-bottom: 2px; color: #12804a; font: 10.800px/14px "Open Sans", sans-serif; letter-spacing: -.15px; }
.sheettab b { font-weight: 700; }
.side { width: 44px; border-left: 1px solid #dedfe0; display: grid; grid-template-rows: 42px 44px 43px 1fr; justify-items: center; align-items: center; font-family: Roboto, sans-serif; font-weight: 500; }
.side svg { margin-top: 2px; }
.side .expand { align-self: end; margin-bottom: 17px; }

.dockrow { height: 26px; display: flex; padding-left: 278px; background: radial-gradient(ellipse 50px 12px at 272px 24px, #260408, transparent); }
.dock { width: 455px; height: 26px; border: 1px solid #4a4b4d; border-bottom: 0; border-radius: 4px 4px 0 0; background: linear-gradient(90deg, #15100f, #2b1510 25%, #563010 48%, #48260e 52%, #2a1710 75%, #121212 92%); display: grid; grid-template-columns: repeat(14, 19.700px) 8.500px repeat(4, 19.700px) 9.500px repeat(4, 19.600px); grid-template-rows: 22px 2px; padding-left: 1px; align-items: center; justify-items: center; }
.ds { width: 1px; height: 19px; background: #5c4c42; }
.dot { width: 2px; height: 2px; border-radius: 1px; background: #c9b8ac; grid-row: 2; }
.d1 { grid-column: 1; } .d6 { grid-column: 6; } .d9 { grid-column: 9; } .d10 { grid-column: 10; } .d12 { grid-column: 12; }
.d16 { grid-column: 16; } .d17 { grid-column: 17; } .d18 { grid-column: 18; } .d19 { grid-column: 19; }

.pointer { position: absolute; left: 397px; top: 397px; }
.tip { position: absolute; left: 687px; top: 420px; width: 293px; height: 124px; background: #fafafa; box-shadow: 0 4px 14px rgba(0,0,0,.45); padding: 16px 19px 0; color: #222; }
.tip h3 { margin: 0; font: 500 12.300px/16px Roboto, sans-serif; color: #202124; }
.tip p { margin: 10px 0 0; font: 10.200px/15.500px Roboto, sans-serif; letter-spacing: -.08px; color: #5f6062; white-space: nowrap; }
.acts { display: flex; justify-content: flex-end; align-items: center; gap: 13px; margin-top: 12px; font: 700 9.800px/14px "Open Sans", sans-serif; letter-spacing: -.15px; color: #3b78e7; }
.got { padding-top: 1px; }
.acts .show { background: #3b79fb; color: #fff; width: 100px; height: 26px; line-height: 27px; text-align: center; }

.player { height: 52px; background: #f0f0f0; border-top: 1px solid #fafafa; }
.seek { height: 18px; display: grid; grid-template-columns: 64px 1241px 61px; align-items: center; font: 11px/16px "Open Sans", sans-serif; letter-spacing: .1px; color: #000; }
.seek span { padding-left: 9px; }
.seek span:last-child { padding-left: 16px; }
.track { height: 9px; margin-top: -1px; border-radius: 3px; border-top: 1px solid #aaa; background: linear-gradient(#b9b9b9, #dedede); }
.track i { display: block; width: 806px; height: 8px; border-radius: 2px 3px 3px 2px; background: #267dcd; }
.controls { height: 32px; padding-left: 4px; display: grid; grid-template-columns: 44px 90px 64px 1064px 20px 75px; align-items: center; }
.group { display: flex; gap: 2px; }
.btn { width: 24px; height: 24px; border: 1px solid #adadad; background: #e1e1e1; display: flex; align-items: center; justify-content: center; }
.play { width: 30px; height: 30px; }
.spk { margin-top: 16px; }
.vol { margin-top: 4px; letter-spacing: -.2px; }

.taskbar { height: 40px; display: flex; background: linear-gradient(90deg, #1f1f1f 0, #1f1f1f 380px, #2c1d20 400px, #341e2b 450px, #2c1d3a 488px, #1b2631 535px, #18272e 620px, #18272e 740px, #20213a 800px, #2b1d36 850px, #301c2b 915px, #281c20 970px, #1f1f1f 1040px); }
.start { width: 48px; padding: 12px 0 0 16px; }
.search { width: 344px; background: #f2f2f2; border: 1px solid #c4c4c4; display: flex; align-items: center; gap: 11px; padding-left: 10px; font-size: 14.400px; color: #333; letter-spacing: -.22px; }
.apps { width: 715px; display: grid; grid-template-columns: 47px 50px 50px 49px 49px 49px 49px 49px 49px 47px 48px; }
.apps div { display: flex; align-items: center; justify-content: center; height: 40px; }
.apps .on { border-bottom: 2px solid #76b9ed; padding-top: 2px; width: 39px; justify-self: center; }
.apps .cur { width: 47px; background: rgba(255,255,255,.24); justify-self: start; margin-left: -1px; }
.tray { width: 259px; padding-left: 10px; display: grid; grid-template-columns: 23px 26px 21px 26px 36px 60px 17px 24px; align-items: center; color: #fff; font-size: 12px; letter-spacing: -.25px; }
.datetime { display: flex; flex-direction: column; align-items: center; line-height: 18px; }
.note { position: relative; margin-left: 16px; }
.note i { position: absolute; left: 7px; top: 6px; width: 17px; height: 17px; border: 1px solid #aaa; border-radius: 50%; background: #383838; text-align: center; font: 600 11px/15px "Open Sans", sans-serif; }
.watermark { position: absolute; left: 1073px; top: 650px; color: #7b7b7b; }
.watermark p { margin: 0; white-space: nowrap; font-size: 18.500px; letter-spacing: .35px; line-height: 24px; }
.watermark p + p { font-size: 14px; letter-spacing: .1px; line-height: 22px; color: #bcbcbc; }
```
